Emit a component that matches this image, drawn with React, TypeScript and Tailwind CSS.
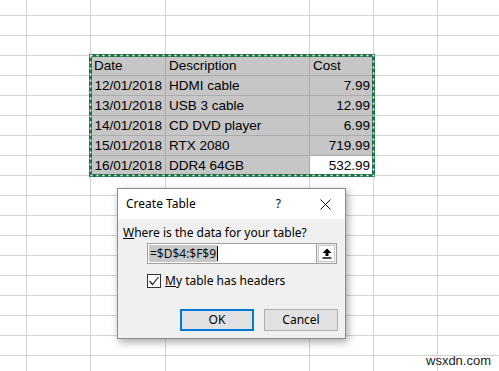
import React from "react";

const colW = [27, 64, 75, 144, 64, 64, 65];
const rowCount = 19;

type Cell = { text: string; align: "left" | "right" };

const data: Record<number, Cell[]> = {
  3: [
    { text: "Date", align: "left" },
    { text: "Description", align: "left" },
    { text: "Cost", align: "left" },
  ],
  4: [
    { text: "12/01/2018", align: "right" },
    { text: "HDMI cable", align: "left" },
    { text: "7.99", align: "right" },
  ],
  5: [
    { text: "13/01/2018", align: "right" },
    { text: "USB 3 cable", align: "left" },
    { text: "12.99", align: "right" },
  ],
  6: [
    { text: "14/01/2018", align: "right" },
    { text: "CD DVD player", align: "left" },
    { text: "6.99", align: "right" },
  ],
  7: [
    { text: "15/01/2018", align: "right" },
    { text: "RTX 2080", align: "left" },
    { text: "719.99", align: "right" },
  ],
  8: [
    { text: "16/01/2018", align: "right" },
    { text: "DDR4 64GB", align: "left" },
    { text: "532.99", align: "right" },
  ],
};

function Grid() {
  const rows = [];
  for (let r = 0; r < rowCount; r++) {
    for (let c = 0; c < colW.length; c++) {
      const inTable = r >= 3 && r <= 8 && c >= 2 && c <= 4;
      const active = r === 8 && c === 4;
      const cell = inTable ? data[r][c - 2] : null;
      rows.push(
        <div
          key={r + "-" + c}
          className={
            "border-r border-b overflow-visible whitespace-nowrap flex items-end pb-[1px] " +
            (inTable
              ? active
                ? "bg-white border-[#ababab] "
                : "bg-[#c6c6c6] border-[#ababab] "
              : "border-[#d4d4d4] ") +
            (cell && cell.align === "right" ? "justify-end pr-[3px]" : "justify-start pl-[3px]")
          }
        >
          {cell ? cell.text : null}
        </div>
      );
    }
  }
  return (
    <div className="grid grid-cols-[27px_64px_75px_144px_64px_64px_65px] grid-rows-[16px_repeat(18,20px)] text-[13.5px] leading-[17px] text-[#000] font-['Liberation_Sans',sans-serif]">
      {rows}
    </div>
  );
}

function UpArrow() {
  return (
    <svg width="10" height="11" viewBox="0 0 10 11">
      <path d="M5 0.5 L9.5 5 L6.5 5 L6.5 8 L3.5 8 L3.5 5 L0.5 5 Z" fill="#000" />
      <rect x="0.5" y="9.3" width="9" height="1.4" fill="#000" />
    </svg>
  );
}

function Dialog() {
  return (
    <div className="absolute left-[117px] top-[188px] w-[229px] h-[151px] bg-[#f0f0f0] border border-[#8c8c8c] shadow-[2px_3px_8px_rgba(0,0,0,0.35)] font-['Noto_Sans',sans-serif] text-[12px] text-black">
      <div className="h-[30px] bg-white flex items-center pl-[8px] pr-[14px]">
        <span className="text-[12px] leading-none">Create Table</span>
        <span className="ml-auto mr-[39px] text-[12px] leading-none">?</span>
        <svg width="11" height="11" viewBox="0 0 11 11">
          <path d="M0.5 0.5 L10.5 10.5 M10.5 0.5 L0.5 10.5" stroke="#111" strokeWidth="1" />
        </svg>
      </div>
      <div className="pl-[5px] pt-[5px]">
        <div className="leading-[18px]">
          <span className="underline">W</span>here is the data for your table?
        </div>
        <div className="ml-[24px] mt-[1px] w-[190px] h-[21px] flex border border-[#a0a0a0] bg-white">
          <div className="flex-1 flex items-center pl-[1px]">
            <span className="bg-[#c8c8c8] leading-[17px] px-[1px] font-['Open_Sans',sans-serif] text-[12px]">=$D$4:$F$9</span>
            <span className="w-[1px] h-[15px] bg-black" />
          </div>
          <div className="w-[20px] h-full border-l border-[#a0a0a0] bg-[#f0f0f0] p-[1px]">
            <div className="w-full h-full bg-white border border-[#c8c8c8] flex items-center justify-center">
              <UpArrow />
            </div>
          </div>
        </div>
        <div className="ml-[24px] mt-[9px] flex items-center">
          <div className="w-[14px] h-[14px] border border-[#333] bg-white flex items-center justify-center">
            <svg width="12" height="12" viewBox="0 0 12 12">
              <path d="M1.5 6 L4.5 9.5 L10.5 2" stroke="#222" strokeWidth="1.2" fill="none" />
            </svg>
          </div>
          <span className="ml-[4px] leading-[16px]">
            <span className="underline">M</span>y table has headers
          </span>
        </div>
        <div className="mt-[20px] flex ml-[57px] gap-[10px]">
          <div className="w-[74px] h-[22px] border-2 border-[#0078d7] bg-[#e1e1e1] flex items-center justify-center">
            OK
          </div>
          <div className="w-[74px] h-[22px] border border-[#adadad] bg-[#e1e1e1] flex items-center justify-center">
            Cancel
          </div>
        </div>
      </div>
    </div>
  );
}

export default function App() {
  return (
    <div className="relative w-[499px] h-[371px] overflow-hidden bg-white">
      <Grid />
      <svg className="absolute left-[89px] top-[54px]" width="286" height="123">
        <rect x="1.5" y="1.5" width="283" height="120" fill="none" stroke="#217346" strokeWidth="3" />
        <rect x="1.5" y="1.5" width="283" height="120" fill="none" stroke="#ffffff" strokeWidth="1.5" strokeDasharray="2 4" />
      </svg>
      <Dialog />
      <div className="absolute left-[426px] top-[353px] text-[13px] leading-[16px] text-[#222] font-['Liberation_Sans',sans-serif]">
        wsxdn.com
      </div>
    </div>
  );
}
